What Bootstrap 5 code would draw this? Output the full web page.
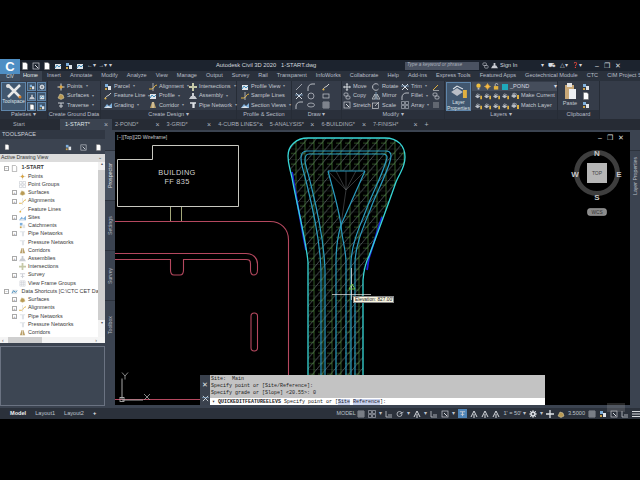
<!DOCTYPE html>
<html lang="en">
<head>
<meta charset="utf-8">
<title>Autodesk Civil 3D 2020</title>
<link href="https://cdn.jsdelivr.net/npm/bootstrap@5.3.0/dist/css/bootstrap.min.css" rel="stylesheet">
<style>
html,body{height:480px;overflow:hidden;background:#000}
body{font:5.6px/1 "Liberation Sans",Arial,sans-serif;color:#c9ced6}
svg{display:block;flex:none}
.defs{width:0;height:0}
.shell{margin-top:60px;height:359px;background:#3b4350;width:640px}
.head{height:21px}
.appbtn{width:20px;height:21px;background:#3d4c5e;color:#dfe3e8;font-size:4.5px;padding-top:15px;text-align:center}
.appc{width:20px;height:15px;margin-top:-21px;background:#4f8fc4;color:#fff;font:700 13px/15px "Liberation Sans",sans-serif;text-align:center}
.titlerow{height:11px;background:#1c232e}
.qat{gap:3px;padding-left:1px;width:196px}
.ttl{width:189px;color:#d5d9df;font-size:5.8px;white-space:pre}
.srch{width:74px;height:8px;background:#4a5261;color:#aab1bc;font-style:italic;font-size:4.8px;padding:1.6px 0 0 2px}
.signin{width:45px;color:#d5d9df;margin-left:3px;gap:2px}
.tools{width:68px;gap:4px;color:#d5d9df}
.winb{gap:5px;color:#d5d9df;font-size:7px}
.tabrow{height:10px;background:#2a313c;gap:9px;color:#b8bec8}
.tabrow span{white-space:nowrap}
.tabrow .on{background:#3b4350;color:#e6e9ee;padding:2px 4px 2px 3px;margin-right:-4px;margin-left:0}
.ribbon{height:38px;background:#353c49}
.rp{border-right:1px solid #262c36}
.rp-b{height:29px;padding-top:1px}
.rp-c{height:9px;background:#2a303b;color:#b8bec8;text-align:center;line-height:9px}
.w48{width:48px}.w53{width:53px}.w136{width:136px}.w55{width:55px}.w50{width:50px}.w103{width:103px}.w113{width:113px}.w42{width:42px}
.bigb{width:25px;height:29px;margin-left:1px;background:#41576f;border:1px solid #5f86ab;text-align:center;color:#dfe3e8;font-size:5px;line-height:5.6px}
.bigb svg{margin:1px auto 0}
.mini{width:20px;margin-left:1px;gap:1px;flex-wrap:wrap;align-content:flex-start}
.mini i{display:flex;width:9px;height:9px;background:#41576f;border:1px solid #5f86ab;align-items:center;justify-content:center}
.rcol{display:flex;flex-direction:column}
.it{height:10px;display:flex;align-items:center;gap:2px;white-space:nowrap;color:#c3c8d0}
.it b{font-weight:400;font-size:4.4px;color:#9aa1ac;margin-left:1px}
.c1{padding-left:9px;width:52px}
.c2{padding-left:3px;width:47px}
.c3{padding-left:1px;width:41px}
.c4{width:48px}
.c5{padding-left:4px;width:55px}
.c6{width:15px;padding-left:3px}
.c7{width:15px}
.c8{width:18px}
.c9{padding-left:1px;width:30px}
.c10{width:29px}
.c11{width:31px}
.c12{width:12px}
.ldd{height:9px;width:85px;background:#454d5b;gap:2px;padding-left:3px;color:#d8dbe0}
.lrows{padding-left:1px}
.lrow2{gap:2px;padding-left:3px}
.pasteb{width:24px;text-align:center;color:#c3c8d0;padding-top:1px;font-size:5.6px}
.pasteb svg{margin:0 auto 1px}
.doctabs{height:11px;background:#262b34;color:#a9afb9}
.dt{width:51.6px;height:11px;padding:0 4px 0 3px;justify-content:space-between;white-space:nowrap}
.dt.st{width:60px;padding-left:13px}
.dt.on{background:#3b4350;color:#dfe3e8;width:52px;padding-left:5px}
.dt em{font-style:normal;font-size:7px;color:#b0b6c0}
.work{height:278px}
.tsp{width:105px;background:#3b4350}
.tshd{height:9px;padding:2px 0 0 2px;color:#cfd3da;background:#303743;letter-spacing:.05px;font-size:5.6px}
.tsic{height:15px;padding:1px 3px 0 4px}
.tsdd{height:8px;background:#dcdcdc;color:#333;padding:0 3px 0 1px;font-size:5.2px}
.tree{height:175px;background:#fff;color:#383838;overflow:hidden}
.tlist{width:98px;padding-top:2px;border:0;margin:0}
.tr{height:8.33px;display:flex;align-items:center;white-space:nowrap;border:0;padding:0;background:none;color:#383838;font-size:5.4px}
.tr svg{margin-right:2px}
.tb{width:5px;height:5px;border:1px solid #aaa;margin-right:2px;flex:none;color:#666;font-size:4px;line-height:3px;text-align:center}
.l1{padding-left:4px}
.l2{padding-left:19px}
.l3{padding-left:12px}
.root{font-weight:700}
.vbar{width:7px;background:#f2f2f2;color:#555;font-size:4px;text-align:center}
.vth{height:150px;background:#cfcfcf;margin:4px 0 1px}
.hbar{height:6px;background:#f4f4f4;gap:2px;padding:0 8px 0 2px;color:#555;font-size:5px;align-items:center}
.hth{width:34px;height:6px;background:#cfcfcf;margin:0 auto 0 2px}
.tsgap{height:3px}
.tspv{height:60px;background:#3d4653;border:1px solid #6b7382}
.pstrip{width:10px;background:#3b4350}
.vtab{height:50px;writing-mode:vertical-rl;transform:rotate(180deg);color:#b9bec7;font-size:5.2px;text-align:center;line-height:10px;border-bottom:1px solid #2c323c}
.vtab.on{background:#48515f;color:#e0e3e8}
.vtab.one{height:20px;background:#3b4350;border:0}
.cv{width:515px;background:#3b4350;padding-top:2px}
.scene{height:273px;background:#000;position:relative;overflow:hidden}
.vlab{position:absolute;left:2px;top:3px;color:#cdd0d5;font-size:5px}
.vctl{position:absolute;right:6px;top:2px;color:#ddd;font-size:7px;gap:5px}
.elev{position:absolute;left:238px;top:164px;width:41px;height:7px;background:#f6f3df;color:#222;border:1px solid #888;font-size:4.8px;line-height:5px;padding-left:1px;white-space:nowrap}
.cmd{position:absolute;left:85px;top:243px;width:345px;height:32px}
.cmdh{width:10px;background:#3a414d;color:#e4e6ea;text-align:center;font-size:7px;padding-top:6px;gap:7px}
.cmdlog{height:23px;background:#c3c3c3;color:#1c1c1c;font:5px/7px "Liberation Mono",monospace;padding:1px 0 0 1px;white-space:pre}
.cmdin{height:9px;background:#fff;color:#222;font:5px/9px "Liberation Mono",monospace;white-space:pre;padding-left:2px}
.cmdin u{text-decoration:none;background:#c9d2ec;color:#223}
.sbar{height:11px;background:#2b313b;color:#bfc4cc}
.ltabs{width:338px;padding-left:10px;gap:9px;font-size:5.6px}
.ltabs .on{color:#f0f0f0;font-weight:700}
.stat{gap:3px}
.stat .hl{background:#4e84b8;padding:1px}
.stat span{white-space:nowrap}
.mk{width:18px;font-size:5.4px}
.wm{position:absolute;left:607px;top:403px;width:18px;height:9px;background:rgba(150,150,150,.25)}
</style>
</head>
<body>
<svg class="defs position-absolute" xmlns="http://www.w3.org/2000/svg">
<defs>
<symbol id="pts" viewBox="0 0 8 8"><path d="M4 .5v7M.5 4h7" stroke="#d8d8d8"/><path d="M4 2l2 2-2 2-2-2z" fill="#d9a441"/></symbol>
<symbol id="srf" viewBox="0 0 8 8"><path d="M1 6l2-4 3 1 1 3-3 1.500z" fill="#b99a55" stroke="#e0d8b0" stroke-width=".5"/></symbol>
<symbol id="trv" viewBox="0 0 8 8"><path d="M1 2h6M4 2v5M2 5h4" stroke="#c9ccd2"/></symbol>
<symbol id="blk" viewBox="0 0 8 8"><rect x="1" y="1" width="3" height="3" fill="#7fb0dc"/><rect x="4" y="3" width="3" height="4" fill="#dfe3e8"/><rect x="1" y="5" width="2" height="2" fill="#c9a24d"/></symbol>
<symbol id="cur" viewBox="0 0 8 8"><path d="M1 7C2 3 4 5 7 1" stroke="#d8d8d8" fill="none"/><circle cx="1.500" cy="6.500" r="1" fill="#e0b040"/></symbol>
<symbol id="grd" viewBox="0 0 8 8"><path d="M0 7l3-4 2 2 3-3v5z" fill="#7fb0dc"/><path d="M0 7l4-2 4 2z" fill="#dfe3e8"/></symbol>
<symbol id="ali" viewBox="0 0 8 8"><path d="M0 6h3c2 0 2-4 5-4" stroke="#e0b040" fill="none"/><path d="M4 0v8" stroke="#d8d8d8" stroke-width=".7"/></symbol>
<symbol id="prf" viewBox="0 0 8 8"><rect x="1" y="2" width="6" height="5" fill="#dfe3e8"/><path d="M1 6l2-3 2 2 2-2" stroke="#3f8fc0" fill="none"/></symbol>
<symbol id="cor" viewBox="0 0 8 8"><path d="M1 7l2-6h2l2 6z" fill="#b9a06a"/><path d="M4 1v6" stroke="#fff" stroke-width=".6"/></symbol>
<symbol id="int" viewBox="0 0 8 8"><path d="M3 0h2v3h3v2H5v3H3V5H0V3h3z" fill="#c6c9a8"/></symbol>
<symbol id="asm" viewBox="0 0 8 8"><path d="M0 7l2-3h4l2 3zM3 1h2v3H3z" fill="#c9ccd2"/></symbol>
<symbol id="pip" viewBox="0 0 8 8"><path d="M1 2h3v5M7 2H5v5" stroke="#dfe3e8" fill="none" stroke-width="1.300"/></symbol>
<symbol id="mov" viewBox="0 0 8 8"><path d="M4 0l1.500 1.500h-1V3.500h2v-1L8 4 6.500 5.500v-1h-2v2h1L4 8 2.500 6.500h1v-2h-2v1L0 4l1.500-1.500v1h2v-2h-1z" fill="#d8dbe0"/></symbol>
<symbol id="cpy" viewBox="0 0 8 8"><rect x="1" y="1" width="4" height="3" rx="1" fill="none" stroke="#c9ccd2" stroke-width=".7"/><rect x="3" y="4" width="4" height="3" rx="1" fill="none" stroke="#c9ccd2" stroke-width=".7"/></symbol>
<symbol id="stc" viewBox="0 0 8 8"><rect x="1" y="1" width="6" height="6" fill="none" stroke="#c9ccd2" stroke-width=".7"/><path d="M3 3l3 3" stroke="#d8dbe0"/></symbol>
<symbol id="rot" viewBox="0 0 8 8"><path d="M6.500 6A3.300 3.300 0 1 1 6.500 2" stroke="#d8dbe0" fill="none" stroke-width=".8"/></symbol>
<symbol id="mir" viewBox="0 0 8 8"><path d="M4 0v8" stroke="#8fb8dc" stroke-width=".7"/><path d="M3 2v5H0zM5 2v5h3z" fill="none" stroke="#d8dbe0" stroke-width=".7"/></symbol>
<symbol id="scl" viewBox="0 0 8 8"><rect x=".5" y="2" width="6" height="5.500" fill="none" stroke="#c9ccd2" stroke-width=".7"/><path d="M3 5l4-4" stroke="#d8dbe0" stroke-width=".7"/></symbol>
<symbol id="trm" viewBox="0 0 8 8"><path d="M1 1l6 6M7 1L1 7" stroke="#d8dbe0"/><path d="M0 3h8" stroke="#8fb8dc" stroke-width=".7"/></symbol>
<symbol id="fil" viewBox="0 0 8 8"><path d="M1 8V5c0-2 2-4 4-4h3" stroke="#d8dbe0" fill="none" stroke-width=".8"/></symbol>
<symbol id="arr" viewBox="0 0 8 8"><path d="M.5.5h3v3h-3zM4.500.5h3v3h-3zM.5 4.500h3v3h-3zM4.500 4.500h3v3h-3z" fill="none" stroke="#b9bec7" stroke-width=".6"/></symbol>
<symbol id="lay" viewBox="0 0 8 8"><path d="M0 4l3-2 3 2-3 2z" fill="#b9bec7"/><path d="M1 2.500l2-1.500 3 1.500" stroke="#dfe3e8" fill="none" stroke-width=".6"/><path d="M6 3h2v4H6z" fill="#e0b040"/></symbol>
<symbol id="bul" viewBox="0 0 8 8"><circle cx="4" cy="3" r="2.500" fill="#f0c040"/><rect x="3" y="5.500" width="2" height="2" fill="#bbb"/></symbol>
<symbol id="sun" viewBox="0 0 8 8"><circle cx="4" cy="4" r="2.500" fill="#f0a830"/><path d="M4 0v8M0 4h8" stroke="#f0c860" stroke-width=".6"/></symbol>
<symbol id="lok" viewBox="0 0 8 8"><rect x="1" y="3.500" width="5" height="4" fill="#e2b13d"/><path d="M2.500 3.500V2c0-2 3-2 3 0" stroke="#e0e0e0" fill="none" stroke-width=".8"/></symbol>
<symbol id="st" viewBox="0 0 8 8"><path d="M1 1h6v6H1zM3 1v6M5 1v6M1 3h6M1 5h6" fill="none" stroke="#c6cad1" stroke-width=".6"/></symbol>
<symbol id="st2" viewBox="0 0 8 8"><path d="M1 1v6h6M3 5h4" fill="none" stroke="#c6cad1" stroke-width=".8"/></symbol>
<symbol id="st3" viewBox="0 0 8 8"><circle cx="3.500" cy="4" r="2.500" fill="none" stroke="#c6cad1" stroke-width=".8"/><path d="M3.500 4l4-2" stroke="#c6cad1" stroke-width=".7"/></symbol>
<symbol id="st4" viewBox="0 0 8 8"><path d="M4 1L1 7M4 1l3 6M4 4v4" fill="none" stroke="#d8dbe0"/></symbol>
<symbol id="gear" viewBox="0 0 8 8"><circle cx="4" cy="4" r="2" fill="none" stroke="#e0e3e8" stroke-width="1.500"/><path d="M4 0v8M0 4h8M1 1l6 6M7 1L1 7" stroke="#e0e3e8" stroke-width=".8"/><circle cx="4" cy="4" r="1" fill="#2b313b"/></symbol>
<symbol id="doc" viewBox="0 0 8 8"><path d="M1.500.5h3.500l1.500 1.500v5.500h-5z" fill="#fff" stroke="#666" stroke-width=".5"/></symbol>
</defs>
</svg>

<div class="shell d-flex flex-column">
  <div class="head d-flex">
    <div class="appbtn">
      CIV
      <div class="appc">C</div>
    </div>
    <div class="flex-grow-1">
      <div class="titlerow d-flex align-items-center">
        <div class="qat d-flex align-items-center">
          <svg width="8" height="8"><use href="#doc"/></svg><svg width="8" height="8"><use href="#stc"/></svg><svg width="8" height="8"><use href="#doc"/></svg><svg width="8" height="8"><use href="#prf"/></svg><svg width="8" height="8"><use href="#blk"/></svg><svg width="8" height="8"><use href="#prf"/></svg><span>←▾</span><span>→▾ ▾</span>
        </div>
        <div class="ttl">Autodesk Civil 3D 2020   1-START.dwg</div>
        <div class="srch">Type a keyword or phrase</div>
        <div class="signin d-flex align-items-center"><svg width="7" height="7"><use href="#cpy"/></svg><svg width="7" height="7"><use href="#asm"/></svg><span>Sign In</span></div>
        <div class="tools d-flex align-items-center justify-content-center"><span>▾</span><span>⛟</span><span>△▾</span><span>❓▾</span></div>
        <div class="winb d-flex"><span>–</span><span>❐</span><span>✕</span></div>
      </div>
      <div class="tabrow d-flex align-items-center">
        <span class="on">Home</span><span>Insert</span><span>Annotate</span><span>Modify</span><span>Analyze</span><span>View</span><span>Manage</span><span>Output</span><span>Survey</span><span>Rail</span><span>Transparent</span><span>InfoWorks</span><span>Collaborate</span><span>Help</span><span>Add-ins</span><span>Express Tools</span><span>Featured Apps</span><span>Geotechnical Module</span><span>CTC</span><span>CIM Project Suite</span>
      </div>
    </div>
  </div>

  <div class="ribbon d-flex">
    <div class="rp w48">
      <div class="rp-b d-flex">
        <div class="bigb"><svg width="18" height="15" viewBox="0 0 18 15"><path d="M3 1l12 12M15 1L3 13" stroke="#e8e8e8" stroke-width="2.500"/><circle cx="3" cy="2" r="2" fill="#e0e0e0"/><circle cx="15" cy="13" r="1.500" fill="#d9822b"/></svg>Toolspace</div>
        <div class="mini d-flex">
          <i><svg width="6" height="6"><use href="#blk"/></svg></i><i><svg width="6" height="6"><use href="#gear"/></svg></i>
          <i><svg width="6" height="6"><use href="#asm"/></svg></i><i><svg width="6" height="6"><use href="#prf"/></svg></i>
          <i><svg width="6" height="6"><use href="#doc"/></svg></i><i><svg width="6" height="6"><use href="#blk"/></svg></i>
        </div>
      </div>
      <div class="rp-c">Palettes ▾</div>
    </div>
    <div class="rp w53">
      <div class="rp-b d-flex">
        <div class="rcol c1">
          <div class="it"><svg width="8" height="8"><use href="#pts"/></svg>Points <b>▾</b></div>
          <div class="it"><svg width="8" height="8"><use href="#srf"/></svg>Surfaces <b>▾</b></div>
          <div class="it"><svg width="8" height="8"><use href="#trv"/></svg>Traverse <b>▾</b></div>
        </div>
      </div>
      <div class="rp-c">Create Ground Data ▾</div>
    </div>
    <div class="rp w136">
      <div class="rp-b d-flex">
        <div class="rcol c2">
          <div class="it"><svg width="8" height="8"><use href="#blk"/></svg>Parcel <b>▾</b></div>
          <div class="it"><svg width="8" height="8"><use href="#cur"/></svg>Feature Line <b>▾</b></div>
          <div class="it"><svg width="8" height="8"><use href="#grd"/></svg>Grading <b>▾</b></div>
        </div>
        <div class="rcol c3">
          <div class="it"><svg width="8" height="8"><use href="#ali"/></svg>Alignment <b>▾</b></div>
          <div class="it"><svg width="8" height="8"><use href="#prf"/></svg>Profile <b>▾</b></div>
          <div class="it"><svg width="8" height="8"><use href="#cor"/></svg>Corridor <b>▾</b></div>
        </div>
        <div class="rcol c4">
          <div class="it"><svg width="8" height="8"><use href="#int"/></svg>Intersections <b>▾</b></div>
          <div class="it"><svg width="8" height="8"><use href="#asm"/></svg>Assembly <b>▾</b></div>
          <div class="it"><svg width="8" height="8"><use href="#pip"/></svg>Pipe Network <b>▾</b></div>
        </div>
      </div>
      <div class="rp-c">Create Design ▾</div>
    </div>
    <div class="rp w55">
      <div class="rp-b d-flex">
        <div class="rcol c5">
          <div class="it"><svg width="8" height="8"><use href="#prf"/></svg>Profile View <b>▾</b></div>
          <div class="it"><svg width="8" height="8"><use href="#ali"/></svg>Sample Lines</div>
          <div class="it"><svg width="8" height="8"><use href="#grd"/></svg>Section Views <b>▾</b></div>
        </div>
      </div>
      <div class="rp-c">Profile &amp; Section Views</div>
    </div>
    <div class="rp w50">
      <div class="rp-b d-flex">
        <div class="rcol c6">
          <div class="it"><svg width="8" height="8"><path d="M1 7L7 1" stroke="#c9ccd2" stroke-width=".7"/></svg></div>
          <div class="it"><svg width="8" height="8"><use href="#trm"/></svg></div>
          <div class="it"><svg width="8" height="8"><use href="#fil"/></svg></div>
        </div>
        <div class="rcol c7">
          <div class="it"><svg width="8" height="8"><use href="#fil"/></svg></div>
          <div class="it"><svg width="8" height="8"><circle cx="4" cy="4" r="3" fill="none" stroke="#c9ccd2" stroke-width=".7"/></svg></div>
          <div class="it"><svg width="8" height="8"><ellipse cx="4" cy="4" rx="3.500" ry="2" fill="none" stroke="#c9ccd2" stroke-width=".7"/></svg></div>
        </div>
        <div class="rcol c8">
          <div class="it"><svg width="8" height="8"><use href="#cur"/></svg></div>
          <div class="it"><svg width="8" height="8"><rect x="1" y="2" width="6" height="4" fill="none" stroke="#c9ccd2" stroke-width=".7"/></svg></div>
          <div class="it"><svg width="8" height="8"><use href="#st"/></svg></div>
        </div>
      </div>
      <div class="rp-c">Draw ▾</div>
    </div>
    <div class="rp w103">
      <div class="rp-b d-flex">
        <div class="rcol c9">
          <div class="it"><svg width="8" height="8"><use href="#mov"/></svg>Move</div>
          <div class="it"><svg width="8" height="8"><use href="#cpy"/></svg>Copy</div>
          <div class="it"><svg width="8" height="8"><use href="#stc"/></svg>Stretch</div>
        </div>
        <div class="rcol c10">
          <div class="it"><svg width="8" height="8"><use href="#rot"/></svg>Rotate</div>
          <div class="it"><svg width="8" height="8"><use href="#mir"/></svg>Mirror</div>
          <div class="it"><svg width="8" height="8"><use href="#scl"/></svg>Scale</div>
        </div>
        <div class="rcol c11">
          <div class="it"><svg width="8" height="8"><use href="#trm"/></svg>Trim <b>▾</b></div>
          <div class="it"><svg width="8" height="8"><use href="#fil"/></svg>Fillet <b>▾</b></div>
          <div class="it"><svg width="8" height="8"><use href="#arr"/></svg>Array <b>▾</b></div>
        </div>
        <div class="rcol c12">
          <div class="it"><svg width="8" height="8"><path d="M1 7l5-5" stroke="#e0b040"/><path d="M1 7.500h6" stroke="#d8d8d8" stroke-width=".6"/></svg></div>
          <div class="it"><svg width="8" height="8"><use href="#cpy"/></svg></div>
          <div class="it"><svg width="8" height="8"><path d="M1 2h6M1 4h6M1 6h6" stroke="#c9ccd2" stroke-width=".6"/></svg></div>
        </div>
      </div>
      <div class="rp-c">Modify ▾</div>
    </div>
    <div class="rp w113">
      <div class="rp-b d-flex">
        <div class="bigb"><svg width="18" height="16" viewBox="0 0 8 7"><use href="#lay"/></svg>Layer Properties</div>
        <div class="lrows">
          <div class="ldd d-flex align-items-center"><svg width="7" height="7"><use href="#bul"/></svg><svg width="7" height="7"><use href="#sun"/></svg><svg width="7" height="7"><use href="#lok"/></svg><svg width="6" height="6"><rect width="6" height="6" fill="#1fa9bc"/></svg><span class="flex-grow-1">_POND</span><b class="fw-normal">▾</b></div>
          <div class="it lrow2"><svg width="7" height="7"><use href="#lay"/></svg><svg width="7" height="7"><use href="#lay"/></svg><svg width="7" height="7"><use href="#lay"/></svg><svg width="7" height="7"><use href="#lay"/></svg><svg width="8" height="8"><use href="#lay"/></svg>Make Current</div>
          <div class="it lrow2"><svg width="7" height="7"><use href="#lay"/></svg><svg width="7" height="7"><use href="#lay"/></svg><svg width="7" height="7"><use href="#lay"/></svg><svg width="7" height="7"><use href="#lay"/></svg><svg width="8" height="8"><use href="#lay"/></svg>Match Layer</div>
        </div>
      </div>
      <div class="rp-c">Layers ▾</div>
    </div>
    <div class="rp w42">
      <div class="rp-b d-flex">
        <div class="pasteb"><svg width="12" height="17" viewBox="0 0 12 17"><rect x="1" y="2" width="9" height="14" fill="#c9a877"/><rect x="3" y="0" width="5" height="4" fill="#e3e3e3"/><rect x="5" y="6" width="7" height="10" fill="#eceff3"/></svg>Paste</div>
        <div class="rcol">
          <div class="it"><svg width="8" height="8"><use href="#blk"/></svg></div>
          <div class="it"><svg width="8" height="8"><use href="#doc"/></svg></div>
          <div class="it"><svg width="8" height="8"><use href="#blk"/></svg></div>
        </div>
      </div>
      <div class="rp-c">Clipboard</div>
    </div>
    <div class="flex-grow-1"></div>
  </div>

  <div class="doctabs d-flex">
    <div class="dt st d-flex align-items-center"><span>Start</span></div>
    <div class="dt on d-flex align-items-center"><span>1-START*</span><em>×</em></div>
    <div class="dt d-flex align-items-center"><span>2-POND*</span><em>×</em></div>
    <div class="dt d-flex align-items-center"><span>3-GRID*</span><em>×</em></div>
    <div class="dt d-flex align-items-center"><span>4-CURB LINES*</span><em>×</em></div>
    <div class="dt d-flex align-items-center"><span>5-ANALYSIS*</span><em>×</em></div>
    <div class="dt d-flex align-items-center"><span>6-BUILDING*</span><em>×</em></div>
    <div class="dt d-flex align-items-center"><span>7-FINISH*</span><em>×</em></div>
    <div class="dt d-flex align-items-center"><em>+</em></div>
  </div>

  <div class="work d-flex">
    <div class="tsp">
      <div class="tshd">TOOLSPACE</div>
      <div class="tsic d-flex align-items-center">
        <svg width="6" height="6"><use href="#doc"/></svg>
        <span class="flex-grow-1"></span>
        <span class="d-flex gap-2 align-items-center"><svg width="7" height="7"><use href="#blk"/></svg><svg width="7" height="7"><use href="#stc"/></svg><svg width="7" height="7"><use href="#doc"/></svg></span>
      </div>
      <div class="tsdd d-flex align-items-center justify-content-between"><span>Active Drawing View</span><span>⌄</span></div>
      <div class="tree d-flex">
        <div class="tlist list-group list-group-flush rounded-0">
          <div class="tr l1"><span class="tb">−</span><svg width="7" height="7"><use href="#doc"/></svg><span class="root">&nbsp;1-START</span></div>
          <div class="tr l2"><svg width="7" height="7"><use href="#pts"/></svg>Points</div>
          <div class="tr l2"><svg width="7" height="7"><use href="#arr"/></svg>Point Groups</div>
          <div class="tr l3"><span class="tb">+</span><svg width="7" height="7"><use href="#srf"/></svg>Surfaces</div>
          <div class="tr l3"><span class="tb">+</span><svg width="7" height="7"><use href="#ali"/></svg>Alignments</div>
          <div class="tr l2"><svg width="7" height="7"><use href="#cur"/></svg>Feature Lines</div>
          <div class="tr l3"><span class="tb">+</span><svg width="7" height="7"><use href="#grd"/></svg>Sites</div>
          <div class="tr l2"><svg width="7" height="7"><use href="#blk"/></svg>Catchments</div>
          <div class="tr l3"><span class="tb">+</span><svg width="7" height="7"><use href="#pip"/></svg>Pipe Networks</div>
          <div class="tr l2"><svg width="7" height="7"><use href="#pip"/></svg>Pressure Networks</div>
          <div class="tr l2"><svg width="7" height="7"><use href="#cor"/></svg>Corridors</div>
          <div class="tr l3"><span class="tb">+</span><svg width="7" height="7"><use href="#asm"/></svg>Assemblies</div>
          <div class="tr l2"><svg width="7" height="7"><use href="#int"/></svg>Intersections</div>
          <div class="tr l3"><span class="tb">+</span><svg width="7" height="7"><use href="#trv"/></svg>Survey</div>
          <div class="tr l2"><svg width="7" height="7"><use href="#st"/></svg>View Frame Groups</div>
          <div class="tr l1"><span class="tb">−</span><svg width="7" height="7"><use href="#prf"/></svg>&nbsp;Data Shortcuts [C:\CTC CET Data...</div>
          <div class="tr l3"><span class="tb">+</span><svg width="7" height="7"><use href="#srf"/></svg>Surfaces</div>
          <div class="tr l3"><span class="tb">+</span><svg width="7" height="7"><use href="#ali"/></svg>Alignments</div>
          <div class="tr l3"><span class="tb">+</span><svg width="7" height="7"><use href="#pip"/></svg>Pipe Networks</div>
          <div class="tr l2"><svg width="7" height="7"><use href="#pip"/></svg>Pressure Networks</div>
          <div class="tr l2"><svg width="7" height="7"><use href="#cor"/></svg>Corridors</div>
        </div>
        <div class="vbar">▴<div class="vth"></div>▾</div>
      </div>
      <div class="hbar d-flex"><span>‹</span><div class="hth"></div><span>›</span></div>
      <div class="tsgap"></div>
      <div class="tspv"></div>
    </div>
    <div class="pstrip">
      <div class="vtab one"></div>
      <div class="vtab on">Prospector</div>
      <div class="vtab">Settings</div>
      <div class="vtab">Survey</div>
      <div class="vtab">Toolbox</div>
    </div>
    <div class="cv">
      <div class="scene">
        <svg width="515" height="273" viewBox="115 132 515 273" xmlns="http://www.w3.org/2000/svg">
          <defs>
            <pattern id="hatch" x="308" y="138" width="9" height="10.500" patternUnits="userSpaceOnUse">
              <path d="M0 10.500L9 0" stroke="#8c9a9a" stroke-width=".5"/>
              <path d="M6 0v10.500M1 5h5" stroke="#4f8f3c" stroke-width=".6"/>
              <path d="M0 0h9" stroke="#5a6a66" stroke-width=".4"/>
            </pattern>
          </defs>
          <!-- building -->
          <path d="M117.500 159.500H152.500V145.500H238.500V206.500H117.500Z" fill="none" stroke="#c8c8c0"/>
          <path d="M170.500 207V221M181.500 207V221" stroke="#a3a77a"/>
          <text x="177" y="175" text-anchor="middle" fill="#d2d2d2" font-family="Liberation Sans" font-size="7.400" letter-spacing=".3">BUILDING</text>
          <text x="177" y="184" text-anchor="middle" fill="#d2d2d2" font-family="Liberation Sans" font-size="7.400" letter-spacing=".3">FF 835</text>
          <!-- red linework -->
          <g fill="none" stroke="#b5485f" stroke-width="1.100">
            <path d="M115 221.500H270C281 221.500 288.500 229 288.500 240V375"/>
            <path d="M115 253.500H246C253 253.500 257.500 258 257.500 264V270C257.500 274 255 275 254 275C252 275 250.500 274 250.500 270V264C250.500 260 249 259.500 246 259.500H183.500V270C183.500 273 182 275 180 275H174C171.500 275 170.500 273 170.500 270V259.500H115"/>
            <rect x="251" y="313" width="6.500" height="38" rx="3.200"/>
            <path d="M115 399.500H200"/>
          </g>
          <!-- corridor -->
          <path id="outer" d="M308 375V262C306 240 297 205 292 178C290 168 288 165 288 156C288 146 296 138 308 138H385C398 138 405 146 405 157C405 168 400 172 396 182C388 205 378 232 369 256C366 262 364 268 363 280V375Z" fill="url(#hatch)"/>
          <path d="M292 172C296 195 301 225 306 250" stroke="#1c22d8" stroke-width="1.800" fill="none"/>
          <path d="M382 217C378 228 375 240 369 258C368 262 368 265 367 270" stroke="#1c22d8" stroke-width="1.800" fill="none"/>
          <path d="M328 171H365L341 225Z" fill="#000"/>
          <path d="M328 171L346 190L365 171M346 190L341 225M346 171V190M336 171L346 190M356 171L346 190" stroke="#6b6f70" stroke-width=".5" fill="none"/>
          <path d="M308 154H388V161L360 215L341 228L330 215Z" fill="none"/>
          <g fill="none" stroke="#2a9cc0" stroke-width="1.200">
            <path d="M321 375V270C320 240 312 205 307 185C304 172 301 165 301 158C301 153 303 151 307 151H386C391 151 392 155 390 161C388 170 380 186 372 205C366 222 356 240 355 262V375"/>
            <path d="M325 375V270C324 240 316 205 311 185C308 172 305 165 305 160C305 156 306 154 309 154H383C387 154 388 157 386 161C384 170 376 186 368 205C362 222 352 240 351 262V375"/>
            <path d="M328 171H365"/>
            <path d="M328 171C333 190 338 205 341 225C342 240 346 250 346 262V375"/>
            <path d="M365 171L341 225C338 235 336 245 336 262V375"/>
          </g>
          <path d="M308 375V262C306 240 297 205 292 178C290 168 288 165 288 156C288 146 296 138 308 138H385C398 138 405 146 405 157C405 168 400 172 396 182C388 205 378 232 369 256C366 262 364 268 363 280V375" fill="none" stroke="#37d6d6" stroke-width="1.300"/>
          <!-- crosshair -->
          <path d="M332 294.500H371M351.500 268V300" stroke="#e6e6e6" stroke-width=".7"/>
          <path d="M352 284l3 5h-6z" fill="none" stroke="#6fbf4a"/>
          <!-- view cube -->
          <circle cx="597" cy="173" r="20.500" fill="none" stroke="#3e3e3e" stroke-width="5"/>
          <rect x="587" y="163" width="20" height="20" fill="#b6b6b6"/>
          <text x="597" y="175" text-anchor="middle" fill="#444" font-family="Liberation Sans" font-size="5">TOP</text>
          <g fill="#c5c5c5" font-family="Liberation Sans" font-weight="700" font-size="8" text-anchor="middle">
            <text x="597" y="156">N</text><text x="597" y="199.500">S</text><text x="575" y="177">W</text><text x="619" y="177">E</text>
          </g>
          <rect x="587.500" y="208.500" width="19" height="7" rx="2.500" fill="#8b8b8b" stroke="#b0b0b0" stroke-width=".5"/>
          <text x="597" y="214" text-anchor="middle" fill="#333" font-family="Liberation Sans" font-size="4.800">WCS</text>
          <!-- UCS -->
          <path d="M122 378.500V400H143" stroke="#a8a8a8" fill="none"/>
          <rect x="120" y="397.500" width="4" height="4" fill="none" stroke="#c0c0c0" stroke-width=".8"/>
          <path d="M122 372.500l3 3.500 3-3.500M125 376v3.500M144 394l6 6M150 394l-6 6" stroke="#a8a8a8" fill="none" stroke-width=".8"/>
        </svg>
        <div class="vlab">[−][Top][2D Wireframe]</div>
        <div class="vctl d-flex"><span>–</span><span>❐</span><span>✕</span></div>
        <div class="elev">Elevation: 827.00'</div>
        <div class="cmd d-flex">
          <div class="cmdh d-flex flex-column"><span>✕</span><svg class="mx-auto" width="7" height="7"><use href="#trm"/></svg></div>
          <div class="flex-grow-1">
            <div class="cmdlog">Site:  Main
Specify point or [Site/Reference]:
Specify grade or [Slope] &lt;20.55&gt;: 0</div>
            <div class="cmdin"><b>▾ QUICKEDITFEATUREELEVS</b> Specify point or [<u>Site</u> <u>Reference</u>]:</div>
          </div>
        </div>
      </div>
    </div>
    <div class="pstrip">
      <div class="vtab one"></div>
      <div class="vtab">Layer Properties Manager</div>
    </div>
  </div>

  <div class="sbar d-flex align-items-center">
    <div class="ltabs d-flex"><span class="on">Model</span><span>Layout1</span><span>Layout2</span><span class="on">+</span></div>
    <div class="stat d-flex align-items-center">
      <span class="mk">MODEL</span>
      <svg width="8" height="8"><use href="#st"/></svg><svg width="8" height="8"><use href="#arr"/></svg><span>▾</span>
      <svg width="8" height="8"><use href="#st2"/></svg><svg width="8" height="8"><use href="#st3"/></svg><span>▾</span>
      <svg width="8" height="8"><use href="#st4"/></svg><span>▾</span>
      <svg width="8" height="8"><use href="#st2"/></svg><svg width="8" height="8"><use href="#stc"/></svg><span>▾</span>
      <span class="hl"><svg width="7" height="7"><use href="#trv"/></svg></span>
      <svg width="8" height="8"><use href="#st4"/></svg><svg width="8" height="8"><use href="#st4"/></svg><svg width="8" height="8"><use href="#st4"/></svg>
      <span>1' = 50' ▾</span>
      <svg width="8" height="8"><use href="#gear"/></svg><span>▾</span>
      <svg width="8" height="8"><path d="M4 0v8M0 4h8" stroke="#e0e3e8" stroke-width="1.300"/></svg>
      <svg width="8" height="8"><use href="#srf"/></svg>
      <span>3.5000</span>
      <svg width="8" height="8"><use href="#st"/></svg><svg width="8" height="8"><use href="#blk"/></svg><svg width="8" height="8"><use href="#stc"/></svg><svg width="8" height="8"><use href="#st2"/></svg><svg width="8" height="8"><path d="M0 1.500h8M0 4h8M0 6.500h8" stroke="#d8dbe0"/></svg>
    </div>
  </div>
</div>
<div class="wm"></div>
</body>
</html>
